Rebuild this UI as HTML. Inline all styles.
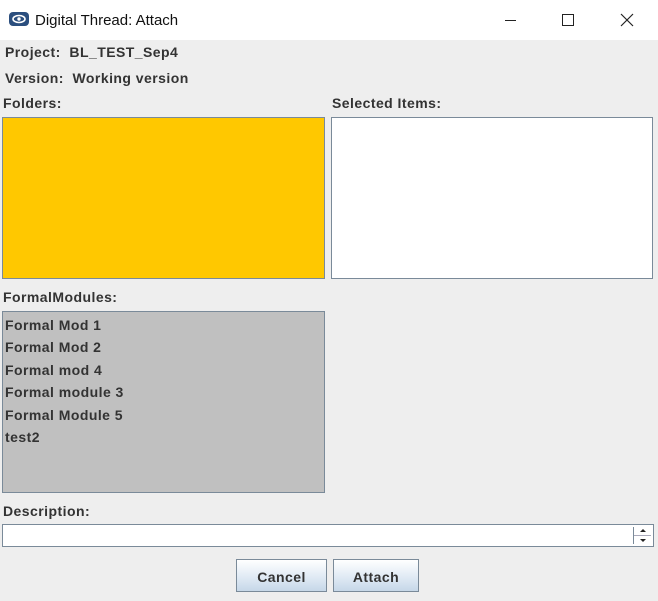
<!DOCTYPE html><html><head><style>
body{margin:0;width:658px;height:601px;background:#eeeeee;font-family:"Liberation Sans",sans-serif;position:relative;overflow:hidden}
.a{position:absolute}
.b{font-weight:bold;font-size:14px;color:#333;white-space:nowrap;letter-spacing:0.45px}
.box{position:absolute;border:1px solid #7a8a99;box-sizing:border-box}
.btn{position:absolute;border:1px solid #7a8a99;box-sizing:border-box;background:linear-gradient(#ffffff,#dde8f3 60%,#c6d7e8);text-align:center;line-height:34px;font-weight:bold;font-size:14px;color:#333;letter-spacing:0.45px}
</style></head><body>
<div class="a" style="left:0;top:0;width:658px;height:40px;background:#fff"></div>
<svg class="a" style="left:9px;top:12px" width="20" height="15" viewBox="0 0 20 15"><rect x="0" y="0" width="20" height="14" rx="4" fill="#2b4e7e"/><ellipse cx="10" cy="7" rx="6" ry="3.5" fill="none" stroke="#fff" stroke-width="1.6"/><circle cx="10" cy="7" r="1.7" fill="#fff"/></svg>
<div class="a" style="left:35px;top:12px;font-size:15px;color:#111">Digital Thread: Attach</div>
<div class="a" style="left:505px;top:20px;width:11px;height:1px;background:#222"></div>
<div class="a" style="left:562px;top:14px;width:10px;height:10px;border:1px solid #222"></div>
<svg class="a" style="left:620px;top:13px" width="14" height="14"><path d="M1 1L13 13M13 1L1 13" stroke="#222" stroke-width="1.2"/></svg>
<div class="a b" style="left:5px;top:44px">Project:&nbsp; BL_TEST_Sep4</div>
<div class="a b" style="left:5px;top:70px">Version:&nbsp; Working version</div>
<div class="a b" style="left:3px;top:95px">Folders:</div>
<div class="a b" style="left:332px;top:95px">Selected Items:</div>
<div class="box" style="left:2px;top:117px;width:323px;height:162px;background:#ffc800"></div>
<div class="box" style="left:331px;top:117px;width:322px;height:162px;background:#fff"></div>
<div class="a b" style="left:3px;top:289px">FormalModules:</div>
<div class="box" style="left:2px;top:311px;width:323px;height:182px;background:#c0c0c0"></div>
<div class="a b" style="left:5px;top:314px;line-height:22.4px">Formal Mod 1<br>Formal Mod 2<br>Formal mod 4<br>Formal module 3<br>Formal Module 5<br>test2</div>
<div class="a b" style="left:3px;top:503px">Description:</div>
<div class="box" style="left:2px;top:524px;width:652px;height:23px;background:#fff"></div>
<div class="a" style="left:633px;top:527px;width:1px;height:17px;background:#7a8a99"></div>
<div class="a" style="left:634px;top:535px;width:17px;height:1px;background:#aab"></div>
<div class="a" style="left:640px;top:529px;width:0;height:0;border-left:3px solid transparent;border-right:3px solid transparent;border-bottom:3px solid #222"></div>
<div class="a" style="left:640px;top:539px;width:0;height:0;border-left:3px solid transparent;border-right:3px solid transparent;border-top:3px solid #222"></div>
<div class="btn" style="left:236px;top:559px;width:91px;height:33px">Cancel</div>
<div class="btn" style="left:333px;top:559px;width:86px;height:33px">Attach</div>
</body></html>
